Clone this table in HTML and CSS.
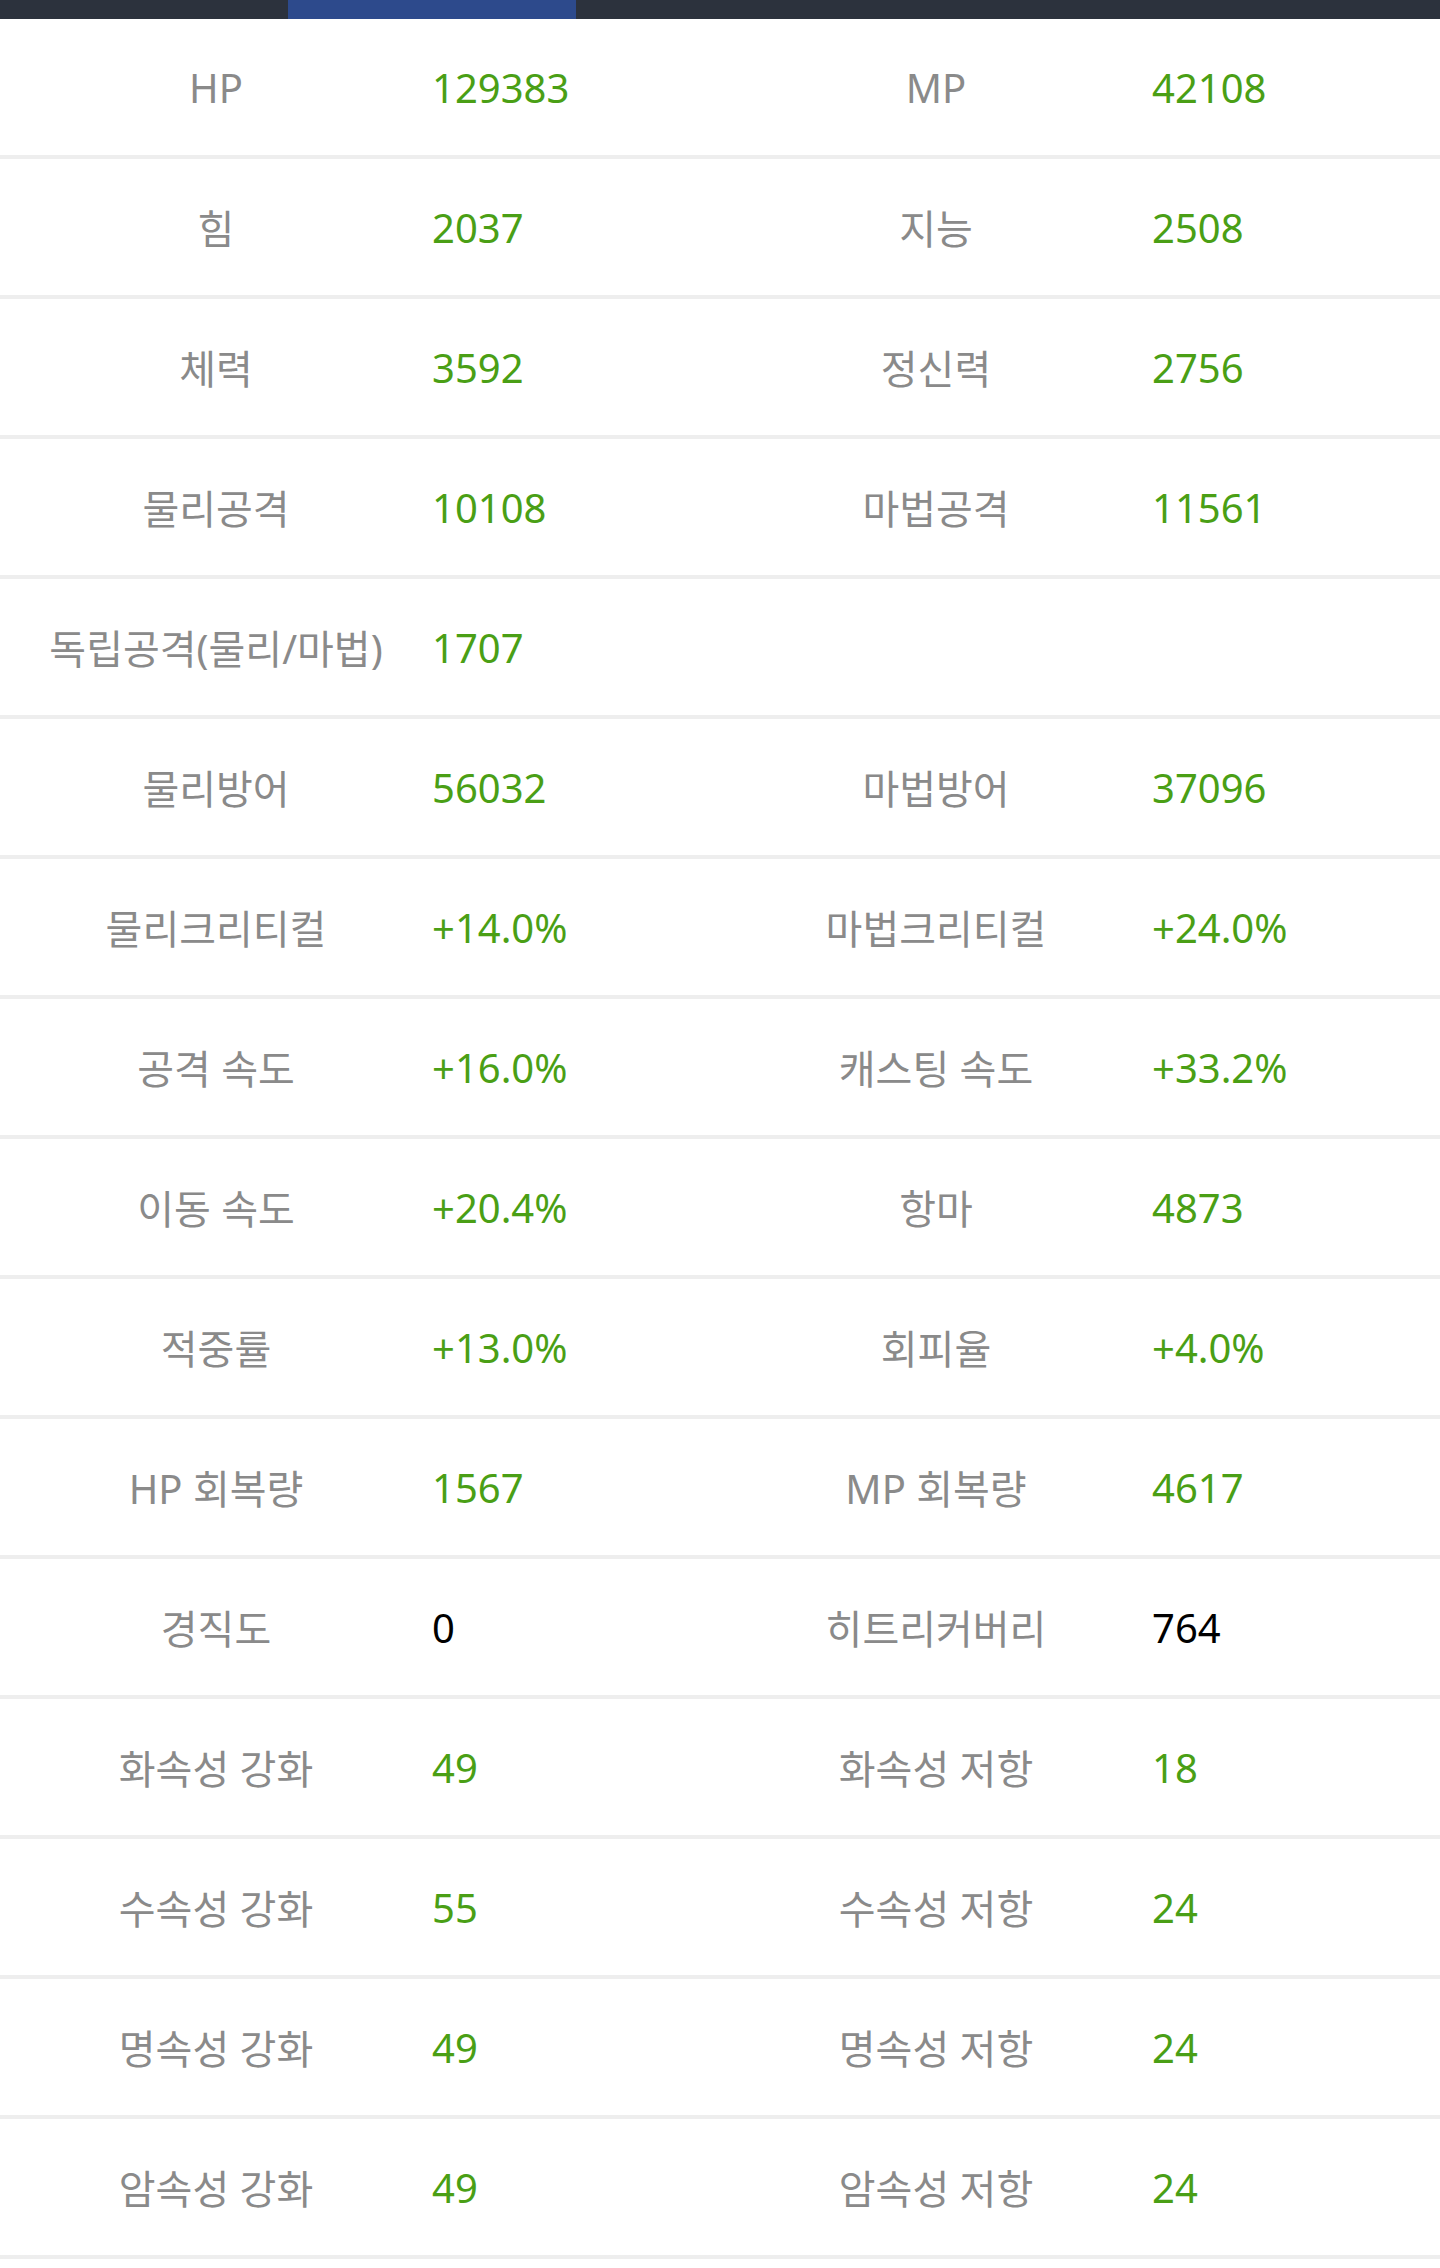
FILE: index.html
```html
<!DOCTYPE html>
<html lang="ko">
<head>
  <meta charset="UTF-8" />
  <title>캐릭터 능력치</title>
  <link rel="stylesheet" href="styles.css">
</head>
<body>

<!-- 상단 탭 -->
<div class="tabs">
  <div class="tab"></div>
  <div class="tab active"></div>
  <div class="tab"></div>
  <div class="tab"></div>
  <div class="tab"></div>
</div>

<!-- 능력치 표 -->
<div class="stats">
  <div class="row">
    <div class="name">HP</div><div class="val">129383</div>
    <div class="name">MP</div><div class="val">42108</div>
  </div>
  <div class="row">
    <div class="name">힘</div><div class="val">2037</div>
    <div class="name">지능</div><div class="val">2508</div>
  </div>
  <div class="row">
    <div class="name">체력</div><div class="val">3592</div>
    <div class="name">정신력</div><div class="val">2756</div>
  </div>
  <div class="row">
    <div class="name">물리공격</div><div class="val">10108</div>
    <div class="name">마법공격</div><div class="val">11561</div>
  </div>
  <div class="row">
    <div class="name">독립공격(물리/마법)</div><div class="val">1707</div>
    <div class="name"></div><div class="val"></div>
  </div>
  <div class="row">
    <div class="name">물리방어</div><div class="val">56032</div>
    <div class="name">마법방어</div><div class="val">37096</div>
  </div>
  <div class="row">
    <div class="name">물리크리티컬</div><div class="val">+14.0%</div>
    <div class="name">마법크리티컬</div><div class="val">+24.0%</div>
  </div>
  <div class="row">
    <div class="name">공격 속도</div><div class="val">+16.0%</div>
    <div class="name">캐스팅 속도</div><div class="val">+33.2%</div>
  </div>
  <div class="row">
    <div class="name">이동 속도</div><div class="val">+20.4%</div>
    <div class="name">항마</div><div class="val">4873</div>
  </div>
  <div class="row">
    <div class="name">적중률</div><div class="val">+13.0%</div>
    <div class="name">회피율</div><div class="val">+4.0%</div>
  </div>
  <div class="row">
    <div class="name">HP 회복량</div><div class="val">1567</div>
    <div class="name">MP 회복량</div><div class="val">4617</div>
  </div>
  <div class="row">
    <div class="name">경직도</div><div class="val plain">0</div>
    <div class="name">히트리커버리</div><div class="val plain">764</div>
  </div>
  <div class="row">
    <div class="name">화속성 강화</div><div class="val">49</div>
    <div class="name">화속성 저항</div><div class="val">18</div>
  </div>
  <div class="row">
    <div class="name">수속성 강화</div><div class="val">55</div>
    <div class="name">수속성 저항</div><div class="val">24</div>
  </div>
  <div class="row">
    <div class="name">명속성 강화</div><div class="val">49</div>
    <div class="name">명속성 저항</div><div class="val">24</div>
  </div>
  <div class="row">
    <div class="name">암속성 강화</div><div class="val">49</div>
    <div class="name">암속성 저항</div><div class="val">24</div>
  </div>
</div>

</body>
</html>
```

FILE: styles.css
```css
* {
  margin: 0;
  padding: 0;
  box-sizing: border-box;
  font-family: 'Noto Sans', 'Noto Sans CJK KR', sans-serif;
}

body {
  background: #fff;
}

.tabs {
  display: flex;
  height: 19px;
  background: #2c323d;
}

.tab {
  flex: 1;
}

.tab.active {
  background: #2d4a8c;
}

.row {
  display: grid;
  grid-template-columns: 30% 20% 30% 20%;
  align-items: center;
  height: 140px;
  border-bottom: 4px solid #eeeeee;
  font-size: 40px;
}

.name {
  text-align: center;
  color: #8a8a8a;
}

.val {
  color: #4a9f15;
}

.val.plain {
  color: #000;
}
```
